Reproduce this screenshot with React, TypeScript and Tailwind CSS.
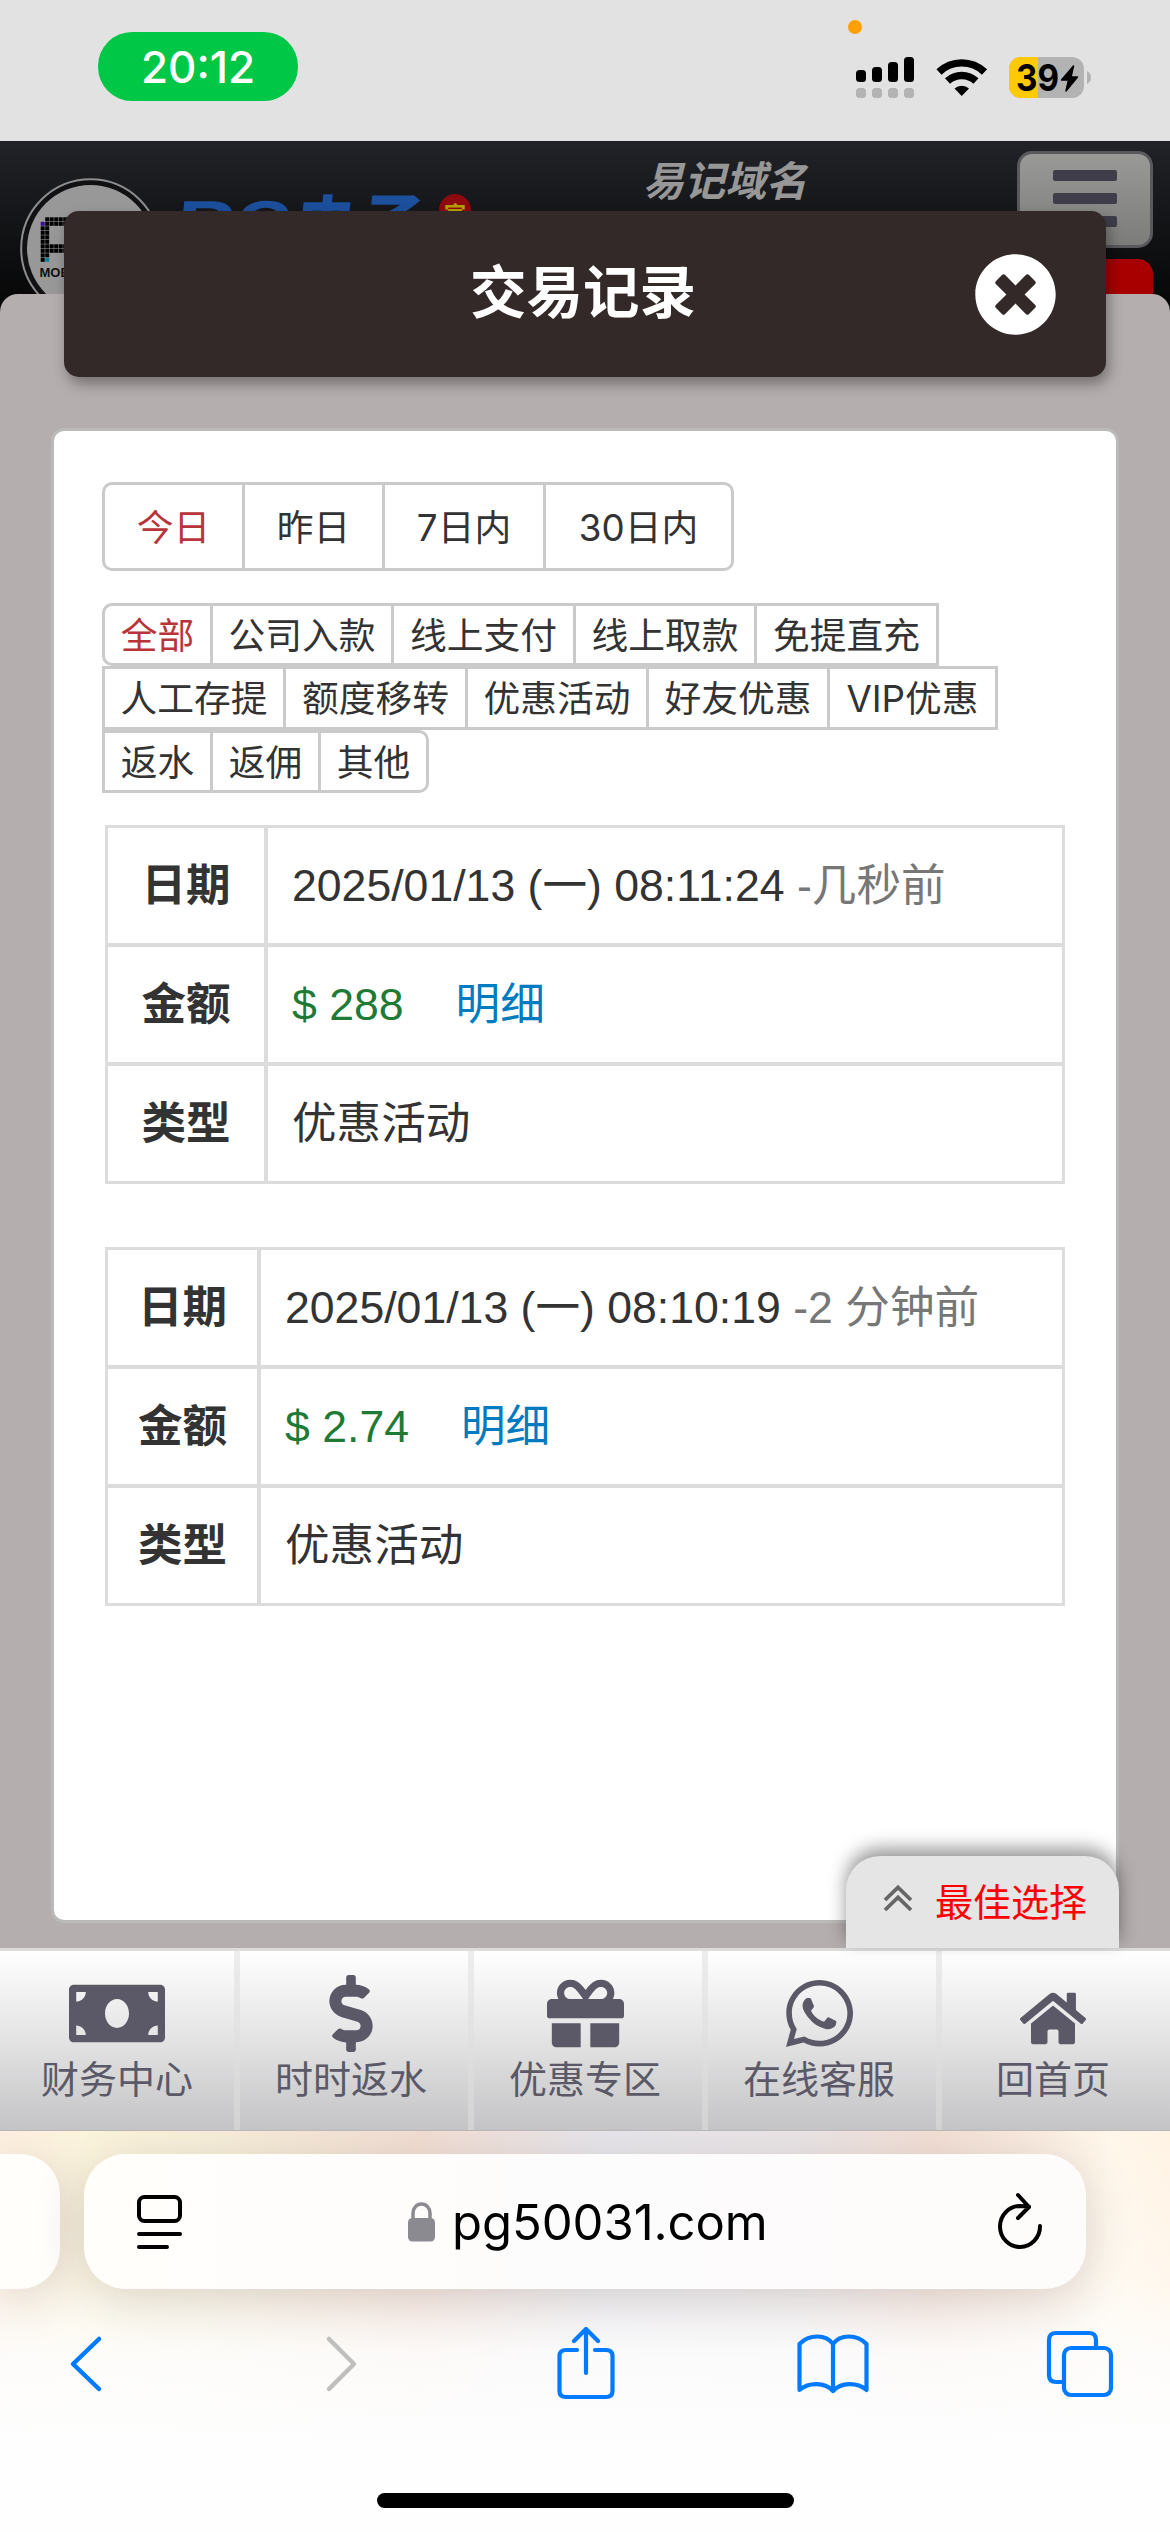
import React, { useState } from "react";
import { clsx } from "clsx";
import {
  FaDollarSign,
  FaGift,
  FaHome,
  FaMoneyBill,
  FaTimesCircle,
  FaWhatsapp,
} from "react-icons/fa";

const dateTabs = [
  { label: "今日", width: "w-[143px]" },
  { label: "昨日", width: "w-[140px]" },
  { label: "7日内", width: "w-[161px]" },
  { label: "30日内", width: "w-[188px]" },
];

const typeRows = [
  [
    { label: "全部", width: "w-[111px]" },
    { label: "公司入款", width: "w-[181px]" },
    { label: "线上支付", width: "w-[182px]" },
    { label: "线上取款", width: "w-[181px]" },
    { label: "免提直充", width: "w-[182px]" },
  ],
  [
    { label: "人工存提", width: "w-[184px]" },
    { label: "额度移转", width: "w-[182px]" },
    { label: "优惠活动", width: "w-[181px]" },
    { label: "好友优惠", width: "w-[181px]" },
    { label: "VIP优惠", width: "w-[168px]" },
  ],
  [
    { label: "返水", width: "w-[111px]" },
    { label: "返佣", width: "w-[108px]" },
    { label: "其他", width: "w-[108px]" },
  ],
];

const records = [
  {
    date: "2025/01/13 (一) 08:11:24",
    ago: "-几秒前",
    amount: "$ 288",
    type: "优惠活动",
    columns: "grid-cols-[156px_1fr]",
  },
  {
    date: "2025/01/13 (一) 08:10:19",
    ago: "-2 分钟前",
    amount: "$ 2.74",
    type: "优惠活动",
    columns: "grid-cols-[149px_1fr]",
  },
];

const navItems = [
  { label: "财务中心", icon: <FaMoneyBill className="h-[77px] w-[96px]" /> },
  { label: "时时返水", icon: <FaDollarSign className="h-[77px] w-[44px]" /> },
  { label: "优惠专区", icon: <FaGift className="h-[77px] w-[77px]" /> },
  { label: "在线客服", icon: <FaWhatsapp className="h-[77px] w-[67px]" /> },
  { label: "回首页", icon: <FaHome className="mt-[10px] h-[59px] w-[66px]" /> },
];

const StatusBar = () => {
  return (
    <div className="flex h-[141px] shrink-0 items-start bg-[#e2e2e2] font-['Inter',sans-serif]">
      <div className="mt-8 ml-[98px] flex h-[69px] w-[200px] items-center justify-center rounded-[34px] bg-[#00c846] text-[44px] font-medium text-white">
        20:12
      </div>
      <svg className="ml-[550px]" width="252" height="110" viewBox="848 0 252 110">
        <circle cx="855" cy="27" r="7" fill="#ff9f00" />
        <rect x="856" y="70" width="10" height="12" rx="3.5" />
        <rect x="872" y="67" width="10" height="15" rx="3.5" />
        <rect x="888" y="62" width="10" height="20" rx="3.5" />
        <rect x="904" y="57" width="10" height="25" rx="3.5" />
        <g fill="#b3b3b3">
          <rect x="856" y="88" width="10" height="10" rx="3.5" />
          <rect x="872" y="88" width="10" height="10" rx="3.5" />
          <rect x="888" y="88" width="10" height="10" rx="3.5" />
          <rect x="904" y="88" width="10" height="10" rx="3.5" />
        </g>
        <g fill="none" stroke="#000" strokeWidth="7.4">
          <path d="M939 72 A33 33 0 0 1 984.500 72" />
          <path d="M947.500 81 A21 21 0 0 1 976 81" />
        </g>
        <path d="M954.500 88.500 A11 11 0 0 1 969 88.500 L961.700 96 Z" />
        <clipPath id="battery">
          <rect x="1009" y="57" width="75" height="41" rx="12" />
        </clipPath>
        <g clipPath="url(#battery)">
          <rect x="1009" y="57" width="75" height="41" fill="#b3b3b3" />
          <rect x="1009" y="57" width="29" height="41" fill="#ffcb00" />
        </g>
        <path d="M1087 71 Q1091 73 1091 77.500 Q1091 82 1087 84 Z" fill="#b3b3b3" />
        <text x="1016" y="91" fontSize="37" fontWeight="700" textLength="43" lengthAdjust="spacingAndGlyphs">
          39
        </text>
        <path
          d="M1073.500 66 L1061.500 80 L1068.500 80 L1066 91 L1077.500 77 L1071 77 Z"
          stroke="#000"
          strokeWidth="1.500"
          strokeLinejoin="round"
        />
      </svg>
    </div>
  );
};

// pixel letter in the round badge, one entry per cell
const badgeCells: { col: number; row: number; color: string }[] = [];
for (let row = 0; row < 10; row++) {
  for (let col = 0; col < 8; col++) {
    const bar = row < 2 || row === 6 || row === 7;
    if (row === 0 && col === 0) continue;
    if (!bar && col > 1) continue;
    let color = "#000000";
    if (row === 1 && col === 0) color = "#3b0f94";
    if (row === 9 && col === 1) color = "#0b7f96";
    badgeCells.push({ col, row, color });
  }
}

const SiteHeader = () => {
  return (
    <header className="flex h-[153px] shrink-0 items-start overflow-hidden">
      <svg className="mt-[37px] ml-5 shrink-0" width="141" height="141" viewBox="20 178 141 141">
        <circle cx="90.500" cy="248.500" r="69.300" fill="#111113" stroke="#8d8d8f" strokeWidth="2" />
        <circle cx="90.500" cy="248.500" r="63.500" fill="#989898" />
        {badgeCells.map((cell) => (
          <rect
            key={`${cell.col}-${cell.row}`}
            x={40.700 + cell.col * 4.5}
            y={217.300 + cell.row * 4.5}
            width="4"
            height="4"
            fill={cell.color}
          />
        ))}
        <text x="39.500" y="277" fontSize="13" fontWeight="700" fontFamily="Liberation Sans" fill="#111">
          MOBILE
        </text>
      </svg>
      <div className="mt-[45px] ml-[16px] flex h-[60px] w-[256px] shrink-0 -skew-x-6 items-start text-[62px] leading-[74px] font-black text-[#1c4f9c]">
        <span className="w-[59px] origin-left scale-x-140">P</span>
        <span className="w-[60px] origin-left scale-x-120">G</span>
        <span className="w-[65px] pt-[2px] text-[60px]">电</span>
        <span className="pt-[2px] text-[64px]">子</span>
      </div>
      <div className="mt-[53px] ml-[6px] flex h-[46px] w-[32px] shrink-0 justify-center rounded-[16px] bg-[#8d0a0f] pt-[9px] text-[22px] leading-[24px] font-bold text-[#b5a000]">
        官
      </div>
      <div className="mt-[18px] ml-[172px] w-[172px] shrink-0 text-[41px] leading-[46px] font-bold text-[#979797] italic">
        易记域名
      </div>
      <div className="mt-[10px] ml-[202px] flex shrink-0 flex-col">
        <button className="flex h-[97px] w-[136px] flex-col items-center gap-3 rounded-[15px] border-[3px] border-[#59595c] bg-linear-to-b from-[#999997] to-[#7c7c7a] pt-4">
          <span className="h-[11px] w-[64px] rounded-[2px] bg-[#3e3d49]" />
          <span className="h-[11px] w-[64px] rounded-[2px] bg-[#3e3d49]" />
          <span className="h-[11px] w-[64px] rounded-[2px] bg-[#3e3d49]" />
        </button>
        <div className="mt-[11px] h-[60px] w-[136px] rounded-[15px] bg-[#a80000]" />
      </div>
    </header>
  );
};

const Filters = () => {
  const [range, setRange] = useState("今日");
  const [kind, setKind] = useState("全部");
  return (
    <div className="font-['Inter','Noto_Sans_CJK_SC',sans-serif] text-[36.75px] leading-[40px] text-[#333]">
      <div className="flex h-[89px]">
        {dateTabs.map((tab) => (
          <button
            key={tab.label}
            onClick={() => setRange(tab.label)}
            className={clsx(
              "flex items-center justify-center border-y-[3px] border-r-[3px] border-[#cacaca] pt-[2px] whitespace-nowrap first:rounded-l-[10px] first:border-l-[3px] last:rounded-r-[10px]",
              tab.width,
              range === tab.label && "text-[#b93439]"
            )}
          >
            {tab.label}
          </button>
        ))}
      </div>
      <div className="mt-8">
        {typeRows.map((row, index) => (
          <div key={index} className="flex h-[63.300px]">
            {row.map((tab) => (
              <button
                key={tab.label}
                onClick={() => setKind(tab.label)}
                className={clsx(
                  "flex items-center justify-center border-y-[3px] border-r-[3px] border-[#cacaca] pt-[3px] whitespace-nowrap first:border-l-[3px]",
                  tab.width,
                  tab.label === "全部" && "rounded-l-[10px]",
                  tab.label === "其他" && "rounded-r-[10px]",
                  kind === tab.label && "text-[#b93439]"
                )}
              >
                {tab.label}
              </button>
            ))}
          </div>
        ))}
      </div>
    </div>
  );
};

const RecordTable = ({ record }: { record: (typeof records)[number] }) => {
  const label = "flex items-center justify-center bg-white pt-[2px] font-bold";
  const value = "flex items-center bg-white pt-[2px] pl-6 whitespace-pre";
  return (
    <div
      className={clsx(
        "ml-[3px] grid h-[359px] w-[960px] grid-rows-3 gap-1 border-[3px] border-[#dcdcdc] bg-[#dcdcdc] text-[44.600px] leading-[52px] text-[#333]",
        record.columns
      )}
    >
      <div className={label}>日期</div>
      <div className={value}>
        {record.date} <span className="text-[#777]">{record.ago}</span>
      </div>
      <div className={label}>金额</div>
      <div className={value}>
        <span className="text-[#1f7a35]">{record.amount}</span>
        <a className="ml-[52px] text-[#007bc0]">明细</a>
      </div>
      <div className={label}>类型</div>
      <div className={value}>{record.type}</div>
    </div>
  );
};

const BottomNav = () => {
  return (
    <nav className="flex h-[183px] shrink-0 border-t-[3px] border-b border-t-[#dcdcdc] border-b-[#b8b6b7] bg-linear-to-b from-white via-[#e3e3e4] to-[#c4c4c6] text-[#5b5967]">
      {navItems.map((item, index) => (
        <a
          key={item.label}
          className={clsx(
            "flex w-[234px] flex-col items-center pt-6 text-[38px] leading-[44px]",
            index > 0 && "shadow-[inset_6px_0_0_rgba(222,222,222,0.55)]"
          )}
        >
          <div className="flex h-[77px] items-center">{item.icon}</div>
          <div className="mt-[6px]">{item.label}</div>
        </a>
      ))}
    </nav>
  );
};

const Browser = () => {
  return (
    <footer className="flex min-h-0 flex-1 flex-col overflow-hidden bg-[linear-gradient(to_bottom,rgba(255,255,255,0)_0px,rgba(255,255,255,0.350)_150px,rgba(253,253,253,0.900)_230px,#fefefe_320px),linear-gradient(to_right,#fff1e2_0px,#fcf5dd_90px,#f9f2dc_190px,#f4dfd4_420px,#e8e7ed_600px,#ebe6e8_800px,#f5e0d6_935px,#fff7ea_1110px,#fff3e4_1170px)]">
      <div className="mt-[23px] flex h-[135px] shrink-0">
        <div className="w-[60px] rounded-r-[40px] bg-[#fffefb] shadow-[0_8px_50px_rgba(60,40,30,0.180)]" />
        <div className="ml-6 flex w-[1002px] items-center rounded-[42px] bg-linear-to-r from-[#fffefb] via-[#fdfcfc] to-[#fefcfb] shadow-[0_8px_50px_rgba(60,40,30,0.180)]">
          <svg className="ml-[51px]" width="48" height="56" fill="none" stroke="#000" strokeWidth="4" strokeLinecap="round">
            <rect x="4" y="3" width="41" height="24" rx="5.500" />
            <path d="M4 40 H45 M4 53 H32" />
          </svg>
          <div className="ml-[225px] flex items-center">
            <svg width="27" height="40">
              <path d="M5 17 V11 a8.500 9 0 0 1 17 0 V17" fill="none" stroke="#8b8a90" strokeWidth="3.500" />
              <rect y="16" width="27" height="23.500" rx="4.500" fill="#8b8a90" />
            </svg>
            <span className="mt-[2px] ml-[17px] w-[314px] font-['Inter',sans-serif] text-[49px] leading-[60px] tracking-[-0.050px] whitespace-nowrap text-black">
              pg50031.com
            </span>
          </div>
          <svg className="mb-[2px] ml-[230px]" width="48" height="58" fill="none" stroke="#000" strokeWidth="4" strokeLinecap="round" strokeLinejoin="round">
            <path d="M44 34 A20 20.500 0 1 1 24 14 L33 14.500 M22 3 L33 15 L22 26" />
          </svg>
        </div>
      </div>
      <div className="mt-[37px] flex h-[76px] shrink-0 items-center text-[#007aff]">
        <svg className="ml-[69px]" width="34" height="58" fill="none" stroke="currentColor" strokeWidth="4.500" strokeLinecap="round" strokeLinejoin="round">
          <path d="M30 4 L4 29 L30 54" />
        </svg>
        <svg className="ml-[222px] text-[#bfbfbd]" width="34" height="58" fill="none" stroke="currentColor" strokeWidth="4.500" strokeLinecap="round" strokeLinejoin="round">
          <path d="M4 4 L29 29 L4 54" />
        </svg>
        <svg className="ml-[198px]" width="58" height="74" fill="none" stroke="currentColor" strokeWidth="4.200" strokeLinecap="round" strokeLinejoin="round">
          <path d="M20 23 H9 Q2.500 23 2.500 29 V64 Q2.500 70 9 70 H49 Q55.500 70 55.500 64 V29 Q55.500 23 49 23 H38" />
          <path d="M29 46 V2.500 M17 14 L29 2 L41 14" />
        </svg>
        <svg className="ml-[182px]" width="72" height="62" fill="none" stroke="currentColor" strokeWidth="4.200" strokeLinejoin="round" strokeLinecap="round">
          <path d="M36 11 C29 1 12 1 2.500 11 V57 C12 49 28 49 36 58 C44 49 60 49 69.500 57 V11 C60 1 43 1 36 11 V57" />
        </svg>
        <svg className="ml-[177px]" width="69" height="68" fill="none" stroke="currentColor" strokeWidth="4.200">
          <path d="M50 17 V10 Q50 3 43 3 H10 Q3 3 3 10 V45 Q3 52 10 52 H18" />
          <rect x="18" y="18" width="47" height="47" rx="7" />
        </svg>
      </div>
      <div className="mt-[91px] h-[15px] w-[417px] shrink-0 self-center rounded-full bg-black" />
    </footer>
  );
};

const App = () => {
  return (
    <div
      lang="zh-CN"
      className="flex h-[2532px] w-[1170px] flex-col overflow-hidden bg-white font-['Liberation_Sans','Noto_Sans_CJK_SC',sans-serif]"
    >
      <StatusBar />
      <div className="flex h-[1807px] shrink-0 flex-col bg-linear-to-b from-[#212328] via-[#050505] via-10% to-black">
        <SiteHeader />
        <main className="relative flex h-[1654px] flex-col rounded-t-[18px] bg-[#b5aeae]">
          <div className="-mt-[83px] ml-[64px] flex h-[166px] w-[1042px] shrink-0 items-center rounded-[15px] bg-[#342929] pl-[406px] text-white shadow-[3px_7px_14px_rgba(0,0,0,0.350)]">
            <h1 className="w-[232px] text-[56.500px] leading-[70px] font-bold">交易记录</h1>
            <FaTimesCircle className="ml-[272px] h-[83px] w-[83px]" />
          </div>
          <section className="mt-[51px] ml-[51px] h-[1495px] w-[1068px] rounded-[13px] border-[3px] border-[#bbbaba] bg-white pt-[51px] pl-12">
            <Filters />
            <div className="mt-8 flex flex-col gap-[63px]">
              {records.map((record) => (
                <RecordTable key={record.date} record={record} />
              ))}
            </div>
          </section>
          <div className="absolute right-[51px] bottom-0 flex h-[92px] w-[273px] items-center rounded-t-[34px] bg-[#e5e5e5] text-[38px] text-[#f00] shadow-[0_-8px_18px_rgba(0,0,0,0.400)]">
            <svg className="mb-[7px] ml-[37px]" width="30" height="30" fill="none" stroke="#666" strokeWidth="3.800">
              <path d="M2 16 L15 3.500 L28 16 M2 26 L15 13.500 L28 26" />
            </svg>
            <span className="mt-[3px] ml-[22px]">最佳选择</span>
          </div>
        </main>
      </div>
      <BottomNav />
      <Browser />
    </div>
  );
};

export default App;
